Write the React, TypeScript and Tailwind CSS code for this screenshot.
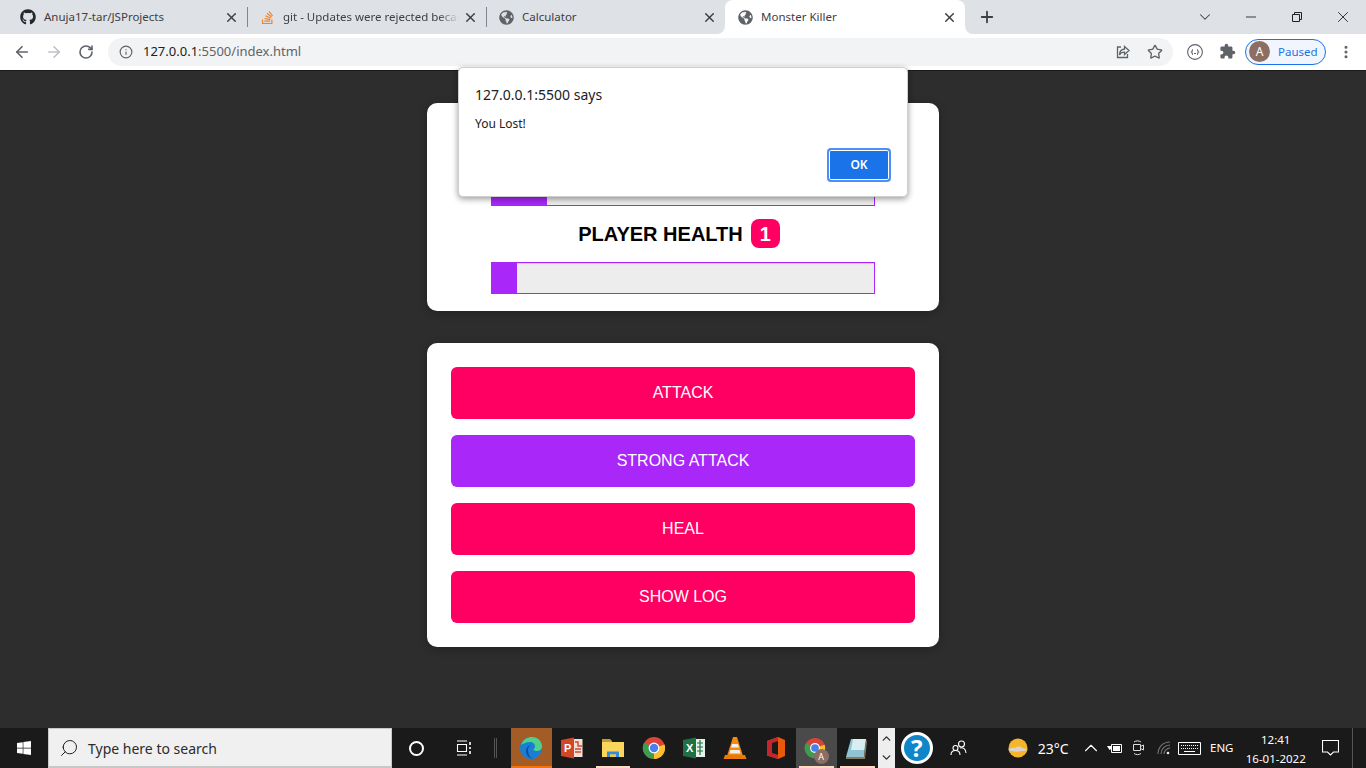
import { ArrowLeft, ArrowRight, RotateCw, Info, Star, X, Plus, ChevronDown, ChevronUp, Minus, Search, EllipsisVertical } from 'lucide-react';
import { FaGithub, FaStackOverflow, FaGlobeAmericas, FaWindows } from 'react-icons/fa';
import { MdExtension } from 'react-icons/md';
import type { ReactNode } from 'react';

const uiFont = "font-['Noto_Sans',sans-serif]";

function Tab({ icon, title, className, fade }: { icon: ReactNode; title: string; className: string; fade?: boolean }) {
  return (
    <div className={`flex h-full flex-none items-center pr-2 ${className}`}>
      <span className="flex h-4 w-4 flex-none items-center justify-center">{icon}</span>
      <span className={`ml-2 w-[176px] flex-none whitespace-nowrap text-[11.5px] text-[#3c4043] ${fade ? '[mask-image:linear-gradient(to_right,#000_88%,transparent)]' : ''}`}>{title}</span>
      <X size={15} strokeWidth={2.4} className="ml-auto flex-none text-[#3c4043]" />
    </div>
  );
}

function Sep() {
  return <div className="h-5 w-px flex-none bg-[#80868b]" />;
}

function ChromeLogo({ size = 24 }: { size?: number }) {
  return (
    <svg width={size} height={size} viewBox="0 0 24 24">
      <circle cx="12" cy="12" r="11" fill="#db4437" />
      <path d="M12 12 L22.5 8.5 A11 11 0 0 1 12 23 Z" fill="#fbc02d" />
      <path d="M12 12 L12 23 A11 11 0 0 1 2.2 6.5 Z" fill="#3e9b4f" />
      <circle cx="12" cy="12" r="5.4" fill="#fff" />
      <circle cx="12" cy="12" r="4.2" fill="#4a80ee" />
    </svg>
  );
}

function TaskItem({ children, active, line, bg }: { children: ReactNode; active?: boolean; line?: boolean; bg?: string }) {
  return (
    <div className={`relative flex h-full w-[40.75px] flex-none items-center justify-center ${bg ?? ''}`}>
      {children}
      {active && <span className="absolute bottom-0 left-0 h-[2px] w-full bg-[#f7730c]" />}
      {line && <span className="absolute bottom-0 left-[3px] right-[3px] h-[2px] bg-[#ffd9c4]" />}
    </div>
  );
}

function GameButton({ label, purple }: { label: string; purple?: boolean }) {
  return (
    <button className={`h-[52px] w-full rounded-[6px] text-[16px] text-white ${purple ? 'bg-[#a927f9]' : 'bg-[#ff0062]'}`}>
      {label}
    </button>
  );
}

function HealthBar({ fill }: { fill: string }) {
  return (
    <div className="mx-auto flex h-8 w-[384px] border border-[#a927f9] bg-[#ededed] shadow-[inset_1px_1px_1px_rgba(0,0,0,0.15)]">
      <div className={`h-full bg-[#a927f9] ${fill}`} />
    </div>
  );
}

export default function App() {
  return (
    <div className={`relative flex h-screen w-full flex-col overflow-hidden bg-[#2d2d2d] ${uiFont}`}>
      {/* Tab strip */}
      <div className="flex h-[34px] flex-none bg-[#dee1e6] pl-2">
        <div className="flex h-full items-center">
          <Tab className="w-[239px] pl-3" icon={<FaGithub size={16} className="text-[#24292e]" />} title="Anuja17-tar/JSProjects" />
          <Sep />
          <Tab className="w-[238px] pl-[11px]" fade icon={<FaStackOverflow size={15} className="text-[#f48024]" />} title="git - Updates were rejected becau" />
          <Sep />
        </div>
        <div className="h-full flex-none bg-white">
          <div className="flex h-full items-center rounded-br-lg bg-[#dee1e6]">
            <Tab className="w-[238px] pl-[11px]" icon={<FaGlobeAmericas size={15} className="text-[#5f6368]" />} title="Calculator" />
          </div>
        </div>
        <Tab className="w-[240px] rounded-t-lg bg-white pl-3" icon={<FaGlobeAmericas size={15} className="text-[#5f6368]" />} title="Monster Killer" />
        <div className="h-full flex-1 bg-white">
          <div className="flex h-full items-center rounded-bl-lg bg-[#dee1e6]">
            <Plus size={18} strokeWidth={2.4} className="ml-[13px] text-[#3c4043]" />
            <ChevronDown size={18} strokeWidth={1.4} className="ml-[200px] text-[#3c4043]" />
            <Minus size={16} strokeWidth={1.3} className="ml-[29px] text-[#202124]" />
            <svg width="12" height="12" viewBox="0 0 12 12" fill="none" stroke="#202124" className="ml-[32px]">
              <path d="M1.5 3.5h7v7h-7zM3.5 3.5v-2h7v7h-2" />
            </svg>
            <X size={18} strokeWidth={1.2} className="ml-[31px] text-[#202124]" />
          </div>
        </div>
      </div>

      {/* Toolbar */}
      <div className="flex h-[37px] flex-none items-center border-b border-[#1a1a1a] bg-white pb-[1px]">
        <ArrowLeft size={18} strokeWidth={2.2} className="ml-[13px] text-[#5f6368]" />
        <ArrowRight size={18} strokeWidth={2.2} className="ml-[14px] text-[#bdc1c6]" />
        <RotateCw size={16} strokeWidth={2.4} className="ml-[15px] text-[#5f6368]" />
        <div className="ml-[14px] flex h-7 w-[1065px] flex-none items-center rounded-full bg-[#f1f3f4]">
          <Info size={14} strokeWidth={2} className="ml-[11px] text-[#5f6368]" />
          <span className="ml-[10px] text-[13px] text-[#5f6368]">
            <span className="text-[#202124]">127.0.0.1</span>:5500/index.html
          </span>
          <svg width="16" height="16" viewBox="0 0 16 16" fill="none" stroke="#5f6368" strokeWidth="1.3" className="ml-auto">
            <path d="M6 3H2.5v10.500h10V10M9.500 2.500 14 6.500l-4.500 4V8.200C7 8.200 5.500 9 4.500 11c0-3.500 2-5.700 5-6z" />
          </svg>
          <Star size={16} strokeWidth={2} className="ml-4 mr-[10px] text-[#5f6368]" />
        </div>
        <svg width="16" height="16" viewBox="0 0 16 16" fill="none" stroke="#5f6368" strokeWidth="1.1" className="ml-[14px]">
          <circle cx="8" cy="8" r="7.400" />
          <path d="M6 5.500C5 5.500 5.500 7.500 4.500 8c1 .5.5 2.500 1.500 2.500M10 5.500c1 0 .5 2 1.500 2.500-1 .5-.5 2.500-1.500 2.500M7 9.500h2" />
        </svg>
        <MdExtension size={17} className="ml-4 text-[#5f6368]" />
        <div className="ml-[9px] flex h-[26px] w-[81px] flex-none items-center rounded-full border border-[#1a73e8] bg-[#e8f0fe]/60 pl-[3px]">
          <span className="flex h-[21px] w-[21px] flex-none items-center justify-center rounded-full bg-[#8d6e63] text-[12px] text-white">A</span>
          <span className="ml-2 text-[11.5px] text-[#1a73e8]">Paused</span>
        </div>
        <EllipsisVertical size={16} strokeWidth={2.6} className="ml-[12px] text-[#5f6368]" />
      </div>

      {/* Page */}
      <main className="flex flex-1 flex-col items-center gap-8 pt-8 font-['Liberation_Sans',sans-serif]">
        <section className="h-[208px] w-[512px] rounded-[10px] bg-white pt-[71px] shadow-[0_2px_8px_rgba(0,0,0,0.26)]">
          <HealthBar fill="w-[55px]" />
          <div className="mt-[13px] flex h-[29px] items-center justify-center pr-2">
            <h2 className="text-[20px] font-bold text-black">PLAYER HEALTH</h2>
            <span className="ml-2 flex h-[29px] w-[29px] items-center justify-center rounded-lg bg-[#ff0062] text-[20px] font-bold text-white">1</span>
          </div>
          <div className="mt-[14px]">
            <HealthBar fill="w-[25px]" />
          </div>
        </section>
        <section className="flex h-[304px] w-[512px] flex-col gap-4 rounded-[10px] bg-white px-6 pt-6 shadow-[0_2px_8px_rgba(0,0,0,0.26)]">
          <GameButton label="ATTACK" />
          <GameButton label="STRONG ATTACK" purple />
          <GameButton label="HEAL" />
          <GameButton label="SHOW LOG" />
        </section>
      </main>

      {/* alert() dialog */}
      <div className="absolute left-[458px] top-[67px] h-[130px] w-[450px] rounded-[5px] border border-[#cfcfcf] bg-white pl-4 pt-[17px] shadow-[0_2px_6px_rgba(0,0,0,0.4)]">
        <p className="text-[14px] leading-5 text-[#202124]">127.0.0.1:5500 says</p>
        <p className="mt-[9px] text-[12px] leading-5 text-[#202124]">You Lost!</p>
        <button className="absolute right-4 top-[80px] h-[34px] w-[64px] rounded-[4px] border-2 border-[#4d90f5] bg-[#1a73e8] text-[12px] font-semibold text-white shadow-[inset_0_0_0_1px_#fff]">
          OK
        </button>
      </div>

      {/* Taskbar */}
      <div className="flex h-10 flex-none items-center bg-[#1a1a1a] text-white">
        <div className="flex h-full w-12 flex-none items-center justify-center">
          <FaWindows size={16} />
        </div>
        <div className="flex h-full w-[344px] flex-none items-center border border-b-2 border-[#c8c8c8] bg-[#f0f0f0]">
          <Search size={20} strokeWidth={1.2} className="ml-[10px] -scale-x-100 text-[#222]" />
          <span className="ml-[9px] pt-px text-[14px] text-[#2b2b2b]">Type here to search</span>
        </div>
        <div className="flex h-full w-12 flex-none items-center justify-center">
          <span className="h-[15px] w-[15px] rounded-full border-2 border-white" />
        </div>
        <div className="flex h-full w-12 flex-none items-center justify-center">
          <svg width="16" height="16" viewBox="0 0 16 16" fill="none" stroke="#fff" strokeWidth="1.1">
            <path d="M1 1h10M1 15h10M1.500 4.500h9v7h-9z" />
            <path d="M14 2v3M14 7v2M14 11v3" strokeWidth="1.6" />
          </svg>
        </div>
        <div className="flex h-full w-[23px] flex-none items-center pl-[6px]">
          <span className="h-5 w-[3px] border-x border-[#555]" />
        </div>

        <TaskItem active bg="bg-[#a45c27]">
          <svg width="24" height="24" viewBox="0 0 24 24">
            <circle cx="12" cy="12" r="11" fill="#1a7fd4" />
            <path d="M2 9C4 3 9 1 13 1c5.500 0 10 4 10 9.500 0 3-2.500 4.500-5 4.500-2 0-3.500-.7-3.500-1.500 0-1 1.500-1 1.500-3C16 8 14 6 11 6 7 6 3.500 8 2 9z" fill="#4fd18b" />
            <path d="M9 14c0-3 2-5 5-5-4 0-7 2-7 6 0 4 3 7.500 7 8-3-1-5-5-5-9z" fill="#0c4f9c" />
          </svg>
        </TaskItem>
        <TaskItem>
          <svg width="24" height="24" viewBox="0 0 24 24">
            <path d="M13 3h9.500v18H13z" fill="#f3e0da" />
            <path d="M15 6h3v4h4M15 13h6M15 16h6" stroke="#d24726" strokeWidth="1.400" fill="none" />
            <path d="M1 4l13-2.500v21L1 20z" fill="#d24726" />
            <text x="4" y="16" fontSize="11" fontWeight="700" fill="#fff" fontFamily="Liberation Sans">P</text>
          </svg>
        </TaskItem>
        <TaskItem line>
          <svg width="24" height="24" viewBox="0 0 24 24">
            <path d="M1 3h8l2 2h0v3H1z" fill="#c79a2e" />
            <path d="M1 6h22v15H1z" fill="#fbd65c" />
            <path d="M6 21v-5.500h12V21h-3v-2.500H9V21z" fill="#2f8fdc" />
            <path d="M9 18.500h6V21H9z" fill="#f5c242" />
          </svg>
        </TaskItem>
        <TaskItem>
          <ChromeLogo />
        </TaskItem>
        <TaskItem>
          <svg width="24" height="24" viewBox="0 0 24 24">
            <path d="M13 3h10v18H13z" fill="#e6f1ea" />
            <path d="M15 7h6M15 11h6M15 15h6M18 4v15" stroke="#1f7145" strokeWidth="1.200" fill="none" />
            <path d="M1 4l13-2.500v21L1 20z" fill="#1f7145" />
            <text x="4" y="16" fontSize="11" fontWeight="700" fill="#fff" fontFamily="Liberation Sans">X</text>
          </svg>
        </TaskItem>
        <TaskItem>
          <svg width="24" height="24" viewBox="0 0 24 24">
            <path d="M10 1h4l6 19H4z" fill="#f08a12" />
            <path d="M9 8h6l1 3.500H8zM7.500 14h9l1 3.500h-11z" fill="#f4f0e8" />
            <path d="M2 19h20l1.500 4H.5z" fill="#e67a0c" />
          </svg>
        </TaskItem>
        <TaskItem>
          <svg width="24" height="24" viewBox="0 0 24 24">
            <path d="M3 5l11-4 7 3v16l-7 3-11-3.500z" fill="#e8590c" />
            <path d="M3 5l11-4v4L8 7v10l6 2v4L3 19.500z" fill="#c4262e" />
            <path d="M8 7l6-2v14l-6-2z" fill="#1a1a1a" />
          </svg>
        </TaskItem>
        <TaskItem line bg="bg-[#4a4a4a]">
          <div className="relative -translate-x-[2px]">
            <ChromeLogo size={22} />
            <span className="absolute -bottom-[5px] -right-[3px] flex h-[15px] w-[15px] items-center justify-center rounded-full bg-[#8d6e63] text-[9px] text-white">A</span>
          </div>
        </TaskItem>
        <TaskItem line>
          <svg width="24" height="24" viewBox="0 0 24 24">
            <path d="M6 3h15l-2 18H1z" fill="#8fc4d4" />
            <path d="M8 3h13l-2 11H6z" fill="#d9eef2" />
            <path d="M21 3l1 3-2 17H1v-2h18z" fill="#8a7a5a" />
          </svg>
        </TaskItem>

        <div className="flex h-full w-[17px] flex-none flex-col items-center justify-between bg-[#eeeeee] py-1 text-[#333]">
          <ChevronUp size={13} strokeWidth={2.6} />
          <ChevronDown size={13} strokeWidth={2.6} />
        </div>
        <div className="flex h-full w-[44px] flex-none items-center justify-center">
          <span className="flex h-8 w-8 items-center justify-center rounded-full border-[3px] border-white bg-[#0f86c9] text-[24px] font-bold leading-none text-white">?</span>
        </div>
        <div className="flex h-full w-10 flex-none items-center justify-center">
          <svg width="18" height="18" viewBox="0 0 18 18" fill="none" stroke="#fff" strokeWidth="1.100">
            <circle cx="11.500" cy="5" r="3" />
            <circle cx="5.500" cy="9" r="2.500" />
            <path d="M1 16c0-3 2-4.500 4.500-4.500S10 13 10 16M10 9c3-1 6 1 6 5" />
          </svg>
        </div>
        <div className="flex h-full w-[100px] flex-none items-center pl-[29px]">
          <svg width="20" height="20" viewBox="0 0 20 20">
            <circle cx="10" cy="10" r="9.500" fill="#f7b52c" />
            <path d="M0 12c3-3 5-2 7-2 2-2 6-2 7 0 2 0 4 1 6 2-3 1-5 1-7 1-3 1-6 1-8 0-2 0-3 0-5-1z" fill="#d9d5cc" />
          </svg>
          <span className="ml-[10px] text-[14px]">23°C</span>
        </div>
        <div className="flex h-full w-6 flex-none items-center justify-center">
          <ChevronUp size={22} strokeWidth={1.2} />
        </div>
        <div className="flex h-full w-6 flex-none items-center justify-center">
          <svg width="16" height="12" viewBox="0 0 16 12" fill="none" stroke="#fff">
            <path d="M4.500 2.500h10v8h-10z" />
            <path d="M6 4h7v5H6zM1 4V1M3.500 4V1M0 4h5v2.500L2.500 8z" fill="#fff" stroke="none" />
          </svg>
        </div>
        <div className="flex h-full w-6 flex-none items-center justify-center">
          <svg width="13" height="16" viewBox="0 0 13 16" fill="none" stroke="#ddd">
            <path d="M1.500 4.500h7v6h-7zM8.500 6.500l3-1.500v5l-3-1.500M2 2c2-1.500 5-1.500 7 0M2 13.500c2 1.500 5 1.500 7 0" />
          </svg>
        </div>
        <div className="flex h-full w-[26px] flex-none items-center justify-center">
          <svg width="14" height="14" viewBox="0 0 14 14" fill="none" stroke="#777" strokeWidth="1.100">
            <path d="M1 13C1 6 6 1 13 1M4 13c0-5 4-9 9-9M7 13c0-3 3-6 6-6" />
            <circle cx="11" cy="12" r="1.300" fill="#eee" stroke="none" />
          </svg>
        </div>
        <div className="flex h-full w-[25px] flex-none items-center justify-center">
          <svg width="23" height="13" viewBox="0 0 23 13" fill="none" stroke="#fff">
            <path d="M.5.500h22v12H.5z" />
            <path d="M3 3.500h17M3 6.500h17" strokeDasharray="1 1" />
            <path d="M6 9.500h11" />
          </svg>
        </div>
        <span className="w-10 flex-none text-center text-[11.5px]">ENG</span>
        <div className="flex h-full w-[68px] flex-none flex-col items-center justify-center pt-px text-[11.5px] leading-[19px]">
          <span>12:41</span>
          <span>16-01-2022</span>
        </div>
        <div className="flex h-full w-[42px] flex-none items-center justify-center">
          <svg width="17" height="16" viewBox="0 0 17 16" fill="none" stroke="#fff" strokeWidth="1.100">
            <path d="M.5.500h16v11.500h-5l-3 3-3-3h-5z" />
          </svg>
        </div>
        <div className="h-full flex-1 border-l border-[#555]" />
      </div>
    </div>
  );
}
